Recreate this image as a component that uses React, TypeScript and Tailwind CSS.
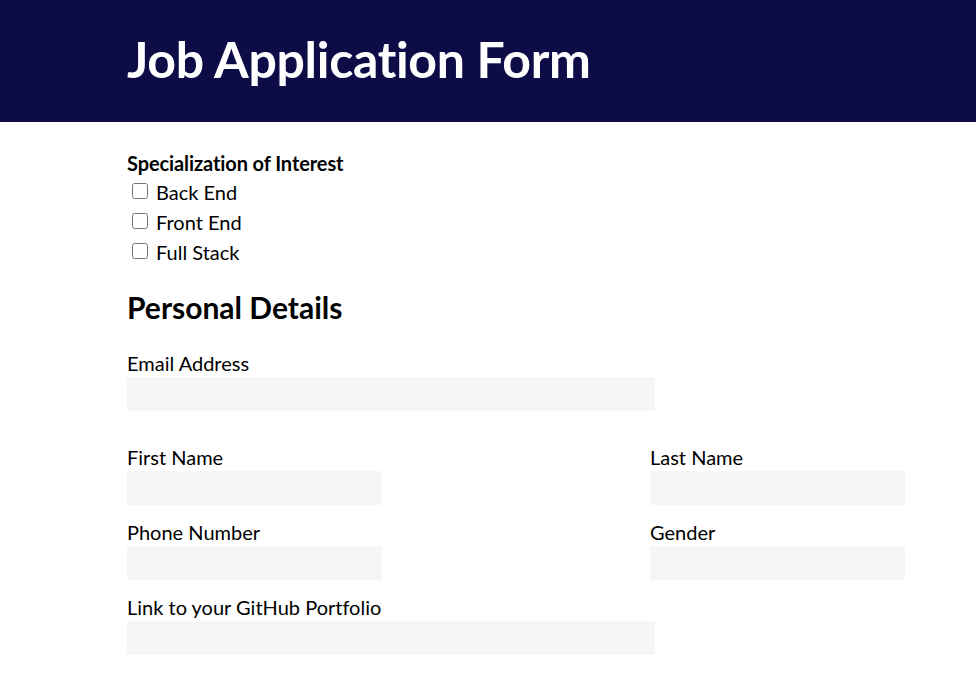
import { ReactNode } from "react";

const Field = ({ label, width, className = "", children }: { label: string; width: string; className?: string; children?: ReactNode }) => (
  <div className={`flex flex-col ${className}`}>
    <label className="text-[20px] leading-[24px] text-black">{label}</label>
    <input className={`mt-[2px] h-[34px] bg-[#f7f5f6] outline-none border-0 ${width}`} />
    {children}
  </div>
);

const specializations = ["Back End", "Front End", "Full Stack"];

export default function App() {
  return (
    <div className="min-h-[687px] bg-white font-['Lato','Liberation_Sans',sans-serif] text-black [font-variant-ligatures:none]">
      {/* Header */}
      <header className="h-[122px] bg-[#0d0c47] flex items-center pl-[127px]">
        <h1 className="text-[50px] font-bold text-white leading-none tracking-[-0.3px] mb-[4px]">Job Application Form</h1>
      </header>

      <form className="pl-[127px] pt-[29px] w-[905px]">
        {/* Specialization */}
        <p className="text-[20px] font-bold leading-[24px] tracking-[-0.1px]">Specialization of Interest</p>
        <div className="flex flex-col mt-[2px]">
          {specializations.map((s) => (
            <label key={s} className="h-[30px] flex items-center text-[20px]">
              <input type="checkbox" className="w-[16px] h-[16px] ml-[5px] mr-[8px] -mt-[3px]" />
              {s}
            </label>
          ))}
        </div>

        {/* Personal Details */}
        <h2 className="text-[30px] font-bold leading-[35px] mt-[23px]">Personal Details</h2>

        <div className="mt-[26px]">
          <Field label="Email Address" width="w-[528px]" />
        </div>

        <div className="mt-[34px] grid grid-cols-[1fr_255px] gap-y-[15px]">
          <Field label="First Name" width="w-[255px]" />
          <Field label="Last Name" width="w-[255px]" />
          <Field label="Phone Number" width="w-[255px]" />
          <Field label="Gender" width="w-[255px]" />
          <Field label="Link to your GitHub Portfolio" width="w-[528px]" className="col-span-2" />
        </div>
      </form>
    </div>
  );
}
